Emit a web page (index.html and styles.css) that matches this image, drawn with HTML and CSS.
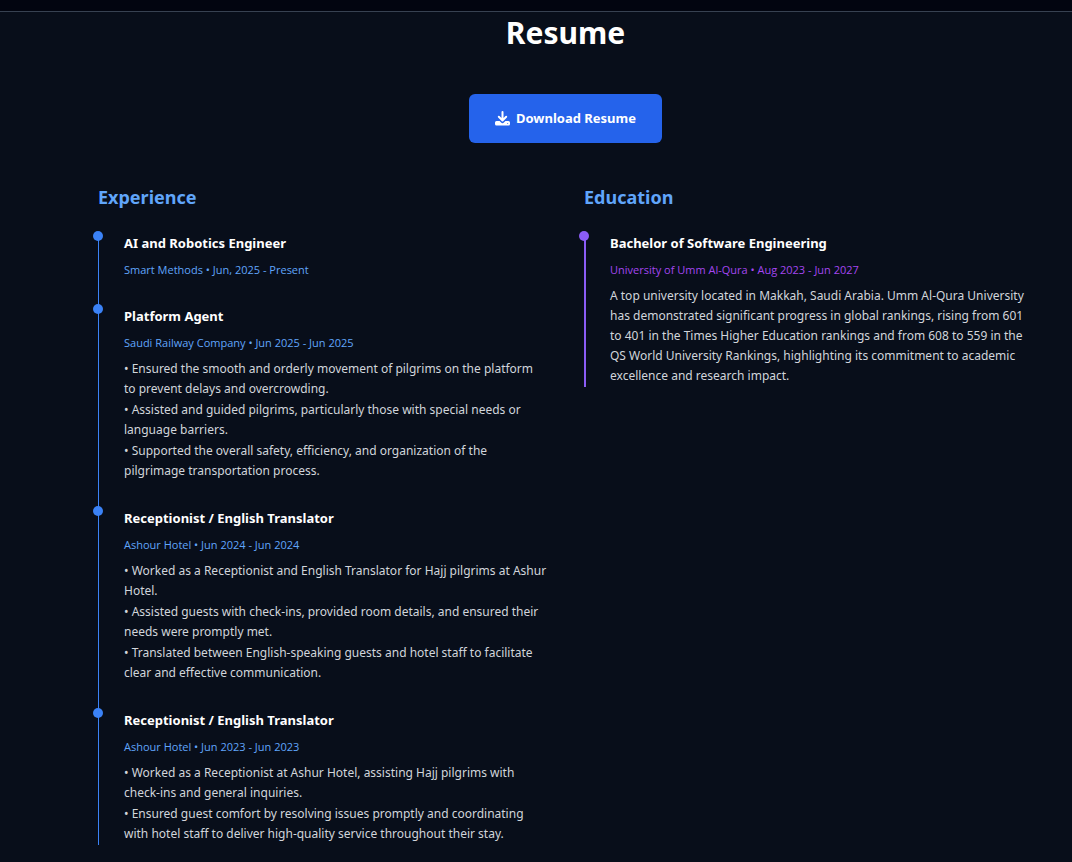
FILE: index.html
```html
<!DOCTYPE html>
<html lang="en">
<head>
<meta charset="utf-8">
<meta name="viewport" content="width=device-width, initial-scale=1">
<title>Resume</title>
<link rel="stylesheet" href="styles.css">
</head>
<body>
<div class="previous-section"></div>
<main class="resume">
  <h1 class="resume-title">Resume</h1>
  <a class="download" href="#resume">
    <svg class="download-icon" viewBox="0 0 15 15" aria-hidden="true"><path fill="none" stroke="currentColor" stroke-width="2" stroke-linecap="round" stroke-linejoin="round" d="M7.500 1v8M3.800 5.800l3.700 3.700 3.700-3.700"/><path fill="currentColor" fill-rule="evenodd" d="M1.500 10H4.600l1.500 1.500a2 2 0 0 0 2.800 0L10.400 10h3.100A1.500 1.500 0 0 1 15 11.500v1.500a1.500 1.500 0 0 1-1.500 1.500h-12A1.500 1.500 0 0 1 0 13v-1.500A1.500 1.500 0 0 1 1.500 10zM12.700 12a.5.5 0 1 0 0 1 .5.5 0 0 0 0-1z"/></svg>
    <span>Download Resume</span>
  </a>
  <div class="columns">
    <section>
      <h2 class="section-title">Experience</h2>
      <div class="timeline">
        <article class="entry">
          <h3 class="entry-title">AI and Robotics Engineer</h3>
          <p class="entry-meta">Smart Methods • Jun, 2025 - Present</p>
        </article>
        <article class="entry">
          <h3 class="entry-title">Platform Agent</h3>
          <p class="entry-meta">Saudi Railway Company • Jun 2025 - Jun 2025</p>
          <div class="entry-text">
            <p>• Ensured the smooth and orderly movement of pilgrims on the platform to prevent delays and overcrowding.</p>
            <p>• Assisted and guided pilgrims, particularly those with special needs or language barriers.</p>
            <p>• Supported the overall safety, efficiency, and organization of the pilgrimage transportation process.</p>
          </div>
        </article>
        <article class="entry">
          <h3 class="entry-title">Receptionist / English Translator</h3>
          <p class="entry-meta">Ashour Hotel • Jun 2024 - Jun 2024</p>
          <div class="entry-text">
            <p>• Worked as a Receptionist and English Translator for Hajj pilgrims at Ashur Hotel.</p>
            <p>• Assisted guests with check-ins, provided room details, and ensured their needs were promptly met.</p>
            <p>• Translated between English-speaking guests and hotel staff to facilitate clear and effective communication.</p>
          </div>
        </article>
        <article class="entry">
          <h3 class="entry-title">Receptionist / English Translator</h3>
          <p class="entry-meta">Ashour Hotel • Jun 2023 - Jun 2023</p>
          <div class="entry-text">
            <p>• Worked as a Receptionist at Ashur Hotel, assisting Hajj pilgrims with check-ins and general inquiries.</p>
            <p>• Ensured guest comfort by resolving issues promptly and coordinating with hotel staff to deliver high-quality service throughout their stay.</p>
          </div>
        </article>
      </div>
    </section>
    <section>
      <h2 class="section-title">Education</h2>
      <div class="timeline timeline-education">
        <article class="entry">
          <h3 class="entry-title">Bachelor of Software Engineering</h3>
          <p class="entry-meta">University of Umm Al-Qura • Aug 2023 - Jun 2027</p>
          <div class="entry-text">
            <p>A top university located in Makkah, Saudi Arabia. Umm Al-Qura University has demonstrated significant progress in global rankings, rising from 601 to 401 in the Times Higher Education rankings and from 608 to 559 in the QS World University Rankings, highlighting its commitment to academic excellence and research impact.</p>
          </div>
        </article>
      </div>
    </section>
  </div>
</main>
</body>
</html>
```
FILE: styles.css
```css
* {
  box-sizing: border-box;
  margin: 0;
}

body {
  background: #080e1a;
  color: #fff;
  font-family: "Segoe UI", "Noto Sans", sans-serif;
  font-size: 12px;
  line-height: 20px;
}

.previous-section {
  height: 12px;
  background: #020510;
  border-bottom: 1px solid #374151;
}

.resume {
  display: flex;
  flex-direction: column;
  align-items: center;
  padding: 0 39px 18px 98px;
}

.resume-title {
  font-size: 30px;
  line-height: 42px;
  font-weight: 700;
}

.download {
  display: flex;
  align-items: center;
  gap: 6px;
  margin-top: 40px;
  padding: 14px 26px;
  border-radius: 6px;
  background: #2563eb;
  color: #fff;
  font-size: 13px;
  line-height: 21px;
  font-weight: 700;
  text-decoration: none;
}

.download-icon {
  width: 15px;
  height: 15px;
}

.columns {
  display: grid;
  grid-template-columns: 1fr 1fr;
  gap: 37px;
  width: 100%;
  margin-top: 41px;
}

.section-title {
  margin-bottom: 23px;
  color: #60a5fa;
  font-size: 18px;
  line-height: 26px;
  font-weight: 700;
}

.timeline {
  --accent: #3b82f6;
  display: grid;
  gap: 26px;
  padding-left: 25px;
  border-left: 1px solid var(--accent);
}

.timeline-education {
  --accent: #8b5cf6;
  padding-left: 24px;
  border-left-width: 2px;
}

.entry {
  position: relative;
}

.entry::before {
  content: "";
  position: absolute;
  top: -2px;
  left: -31px;
  width: 10px;
  height: 10px;
  border-radius: 50%;
  background: var(--accent);
}

.entry-title {
  font-size: 13px;
  line-height: 20px;
  font-weight: 700;
}

.entry-meta {
  margin-top: 7px;
  color: #60a5fa;
  font-family: "Segoe UI", "Open Sans", sans-serif;
  font-size: 11px;
}

.timeline-education .entry-meta {
  color: #a446f0;
}

.entry-text {
  display: grid;
  gap: 1px;
  margin-top: 6px;
  padding-bottom: 1px;
  color: #d1d5db;
}
```
